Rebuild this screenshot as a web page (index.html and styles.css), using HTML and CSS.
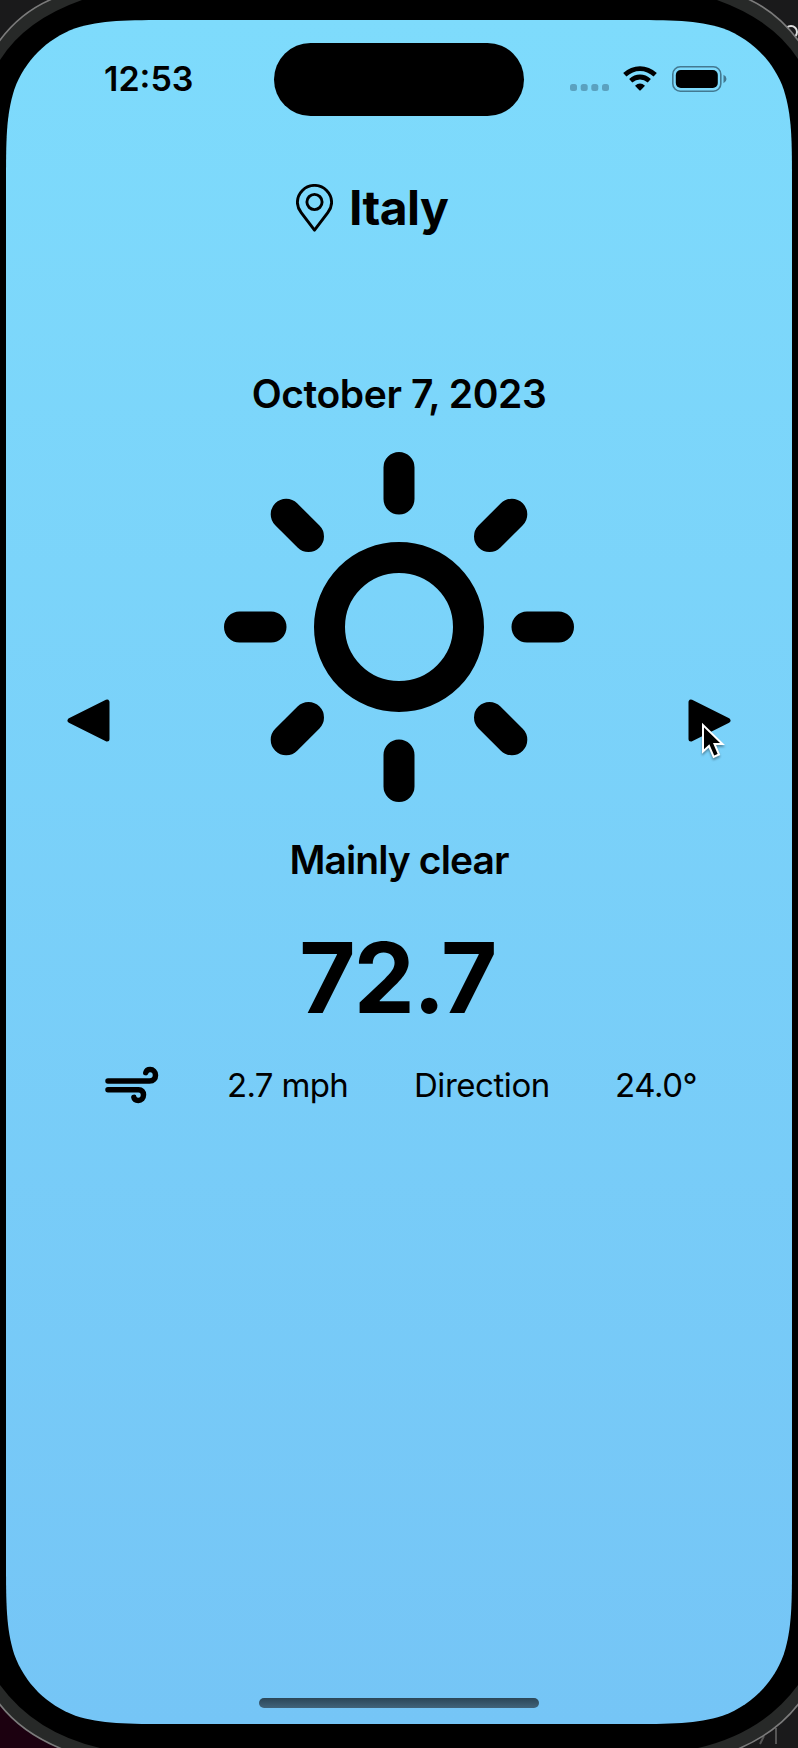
FILE: index.html
```html
<!DOCTYPE html>
<html lang="en">
<head>
<meta charset="utf-8">
<title>Weather</title>
<link rel="stylesheet" href="styles.css">
</head>
<body>
<div class="device">
  <svg class="frame" viewBox="0 0 798 1748" aria-hidden="true">
    <defs>
      <linearGradient id="sky" x1="0" y1="0" x2="0" y2="1">
        <stop offset="0" stop-color="#7edbfc"/>
        <stop offset="1" stop-color="#75c5f6"/>
      </linearGradient>
    </defs>
    <rect width="798" height="1748" fill="#1a1a1b"/>
    <rect y="1600" width="200" height="148" fill="#1c0110"/>
    <circle cx="791" cy="32" r="6" fill="none" stroke="#ddd" stroke-width="2"/>
    <path d="M776 1728v16M764 1736l-4 8" stroke="#555" stroke-width="2"/>
    <path d="M-2 43Q19 13 52-1H748Q779 13 800 43V1702Q778 1732 738 1749H62Q20 1732-2 1702Z" fill="#272928" stroke="#7b7b7b" stroke-width="1.6"/>
    <path d="M0 60Q25 20 82 0H717Q773 20 798 59V1685Q763 1733 698 1748H100Q35 1733 0 1685Z"/>
    <path fill="url(#sky)" d="M174 20H624C672.300 20 696.500 20 722.600 28.300C751.100 38.600 773.400 60.900 783.700 89.400C792 115.500 792 139.700 792 188V1556C792 1604.300 792 1628.500 783.700 1654.600C773.400 1683.100 751.100 1705.400 722.600 1715.700C696.500 1724 672.300 1724 624 1724H174C125.700 1724 101.500 1724 75.400 1715.700C46.900 1705.400 24.600 1683.100 14.300 1654.600C6 1628.500 6 1604.300 6 1556V188C6 139.700 6 115.500 14.300 89.400C24.600 60.900 46.900 38.600 75.400 28.300C101.500 20 125.700 20 174 20Z"/>
  </svg>

  <main class="screen">
    <header class="status">
      <span class="time">12:53</span>
      <span class="island"></span>
      <span class="indicators">
        <svg class="cell" viewBox="0 0 40 7"><g fill="#5ba1bf"><rect width="7" height="7" rx="2.500"/><rect x="10.700" width="7" height="7" rx="2.500"/><rect x="21.300" width="7" height="7" rx="2.500"/><rect x="32" width="7" height="7" rx="2.500"/></g></svg>
        <svg class="wifi" viewBox="0 0 34 25"><g fill="none" stroke="#000" stroke-width="4.800"><path d="M1.800 8.800Q8.500 2.600 17 2.600T32.200 8.800"/><path d="M7.700 14.700Q12 11 17 11T26.300 14.700"/></g><path d="M12 19.700Q17 15.500 22 19.700L17.700 24.200Q17 24.900 16.300 24.200Z"/></svg>
        <svg class="battery" viewBox="0 0 55 26"><rect x=".8" y=".8" width="48" height="24.400" rx="7.500" fill="none" stroke="#437991" stroke-width="1.600"/><rect x="3.800" y="4" width="42" height="18" rx="5"/><path d="M51.500 8.800Q54.500 10.200 54.500 13T51.500 17.200Z" fill="#437991"/></svg>
      </span>
    </header>

    <div class="location">
      <svg class="pin" viewBox="0 0 37 48"><g fill="none" stroke="#000" stroke-width="2.900" stroke-linejoin="round"><path d="M18.500 46.200L5.200 28.700Q1.400 23.500 1.400 18.500A17.100 17.100 0 0 1 35.600 18.500Q35.600 23.500 31.800 28.700Z"/><circle cx="18.500" cy="18" r="7.600"/></g></svg>
      <h1 class="place">Italy</h1>
    </div>

    <section class="pager">
      <svg class="arrow" viewBox="0 0 43 43"><path d="M3 21.500L40 3V40Z" stroke="#000" stroke-width="5" stroke-linejoin="round"/></svg>
      <div class="day">
        <div class="date">October 7, 2023</div>
        <svg class="sun" viewBox="-175 -175 350 350"><g fill="none" stroke="#000" stroke-width="31" stroke-linecap="round"><circle r="69.500"/><path d="M0-159.500V-128M0 159.500V128M-159.500 0H-128M159.500 0H128M-112.800-112.800L-90.500-90.500M112.800-112.800L90.500-90.500M-112.800 112.800L-90.500 90.500M112.800 112.800L90.500 90.500"/></g></svg>
        <div class="condition">Mainly clear</div>
        <div class="temperature">72.7</div>
      </div>
      <div class="next">
        <svg class="arrow" viewBox="0 0 43 43"><path d="M40 21.500L3 3V40Z" stroke="#000" stroke-width="5" stroke-linejoin="round"/></svg>
        <svg class="cursor" viewBox="0 0 26 40"><path d="M2 3V29.500L8 24L12.700 35L18 32.500L13.500 22H21.500Z" stroke="#fff" stroke-width="2"/></svg>
      </div>
    </section>

    <div class="wind">
      <svg class="wind-icon" viewBox="0 0 54 38"><g fill="none" stroke="#000" stroke-width="5.500" stroke-linecap="round" stroke-linejoin="round"><path d="M3 15H44.500C48.500 15 50.500 12.500 50.500 9.200C50.500 5.800 48 3.500 45.200 3.500C43 3.500 41.300 4.700 40.800 6.600"/><path d="M3 23.800H33.500C36.800 23.800 38.500 25.800 38.500 28.800C38.500 32.200 36.300 34.500 33.300 34.500C31 34.500 29.200 33.200 28.900 31.400"/></g></svg>
      <span class="speed">2.7 mph</span>
      <span class="direction">Direction</span>
      <span class="degrees">24.0°</span>
    </div>

    <div class="home"></div>
  </main>
</div>
</body>
</html>
```
FILE: styles.css
```css
body {
  margin: 0;
  background: #000;
  color: #000;
  font-family: Inter, "Liberation Sans", sans-serif;
}

svg {
  display: block;
  flex: none;
}

.device {
  position: relative;
  width: 798px;
  height: 1748px;
  overflow: hidden;
}

.frame {
  position: absolute;
  inset: 0;
  width: 798px;
  height: 1748px;
}

.screen {
  position: relative;
  display: flex;
  flex-direction: column;
  box-sizing: border-box;
  width: 798px;
  height: 1748px;
  padding: 20px 6px 40px;
}

.status {
  display: grid;
  grid-template-columns: 268px 250px 268px;
  align-items: center;
  height: 118px;
}

.time {
  padding-left: 98px;
  font-size: 34px;
  font-weight: 600;
  line-height: 40px;
  white-space: nowrap;
}

.island {
  height: 73px;
  border-radius: 37px;
  background: #000;
}

.indicators {
  display: flex;
  align-items: center;
  padding-left: 46px;
}

.cell {
  width: 40px;
  height: 7px;
  margin-top: 17px;
}

.wifi {
  width: 34px;
  height: 25px;
  margin-left: 13px;
  margin-top: -1px;
}

.battery {
  width: 55px;
  height: 26px;
  margin-left: 15px;
  margin-top: -1px;
}

.location {
  display: flex;
  align-items: center;
  gap: 16px;
  height: 60px;
  margin-top: 40px;
  padding-left: 290px;
}

.pin {
  width: 37px;
  height: 48px;
}

.place {
  margin: 0;
  font-size: 48px;
  font-weight: 700;
  letter-spacing: -0.6px;
  line-height: 60px;
}

.pager {
  display: flex;
  align-items: center;
  justify-content: space-between;
  height: 701px;
  margin-top: 132px;
  padding: 0 61px;
}

.arrow {
  width: 43px;
  height: 43px;
}

.next {
  position: relative;
}

.cursor {
  position: absolute;
  top: 23px;
  left: 13px;
  width: 26px;
  height: 40px;
  filter: drop-shadow(0 2px 1px rgba(0, 0, 0, 0.35));
}

.day {
  display: flex;
  flex-direction: column;
  align-items: center;
  align-self: flex-start;
  width: 350px;
  white-space: nowrap;
}

.date,
.condition {
  font-size: 39px;
  font-weight: 600;
  line-height: 48px;
}

.date {
  letter-spacing: -0.4px;
}

.condition {
  letter-spacing: -0.9px;
}

.sun {
  width: 350px;
  height: 350px;
  margin: 34px 0;
}

.temperature {
  margin-top: 34px;
  margin-right: 3px;
  font-size: 97px;
  font-weight: 700;
  letter-spacing: -1.9px;
  line-height: 120px;
}

.wind {
  display: grid;
  grid-template-columns: 122px 187px 201px auto;
  align-items: center;
  height: 28px;
  padding-left: 99px;
  font-size: 33px;
  letter-spacing: -0.45px;
  line-height: 28px;
  white-space: nowrap;
}

.speed {
  letter-spacing: -0.65px;
}

.wind-icon {
  width: 54px;
  height: 38px;
  margin: -5px 0;
}

.home {
  align-self: center;
  width: 280px;
  height: 10px;
  margin-top: auto;
  border-radius: 5px;
  background: linear-gradient(#2b4658, #41637a);
}
```
